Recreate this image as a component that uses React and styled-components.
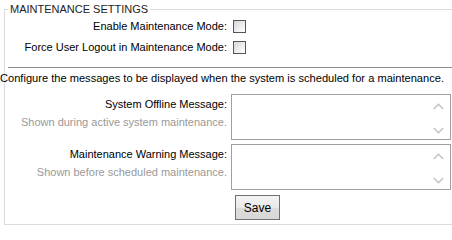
import React from "react";
import styled, { createGlobalStyle } from "styled-components";

const Global = createGlobalStyle`
  html, body { margin: 0; padding: 0; background: #fff; overflow: hidden; }
  body {
    font-family: "Liberation Sans", Arial, sans-serif;
    font-size: 11px;
    color: #000;
    width: 452px;
  }
`;

const Fieldset = styled.fieldset`
  box-sizing: border-box;
  width: 470px;
  margin: 3px 0 0 4px;
  padding: 0 0 4px 0;
  border: 1px solid #dcdcdc;
  min-width: 0;
`;

const Legend = styled.legend`
  padding: 0 2px;
  margin-left: 3px;
  font-size: 11px;
  line-height: 13px;
  color: #222;
  text-transform: uppercase;
`;

const CheckRow = styled.div`
  display: flex;
  align-items: center;
  height: 21px;
`;

const Label = styled.label`
  width: 222px;
  text-align: right;
  line-height: 13px;
  white-space: nowrap;
`;

const Checkbox = styled.input.attrs({ type: "checkbox" })`
  appearance: none;
  -webkit-appearance: none;
  box-sizing: border-box;
  width: 13px;
  height: 13px;
  margin: 0 0 0 6px;
  border: 1px solid #555;
  background: linear-gradient(135deg, #d6d6d6 0%, #f4f4f4 70%, #fff 100%);
`;

const Divider = styled.div`
  margin: 9px 0 0 3px;
  border-top: 1px solid #8c8c8c;
  height: 0;
`;

const Intro = styled.p`
  margin: 4px 0 0 -5px;
  font-size: 11.1px;
  line-height: 13px;
  white-space: nowrap;
`;

const MessageRow = styled.div`
  display: flex;
  margin-top: ${(p) => p.$gap}px;
`;

const LabelCol = styled.div`
  width: 222px;
  padding-top: 4px;
  text-align: right;
  white-space: nowrap;
  line-height: 13px;
`;

const Hint = styled.div`
  margin-top: 5px;
  color: #999;
`;

const AreaBox = styled.div`
  box-sizing: border-box;
  display: flex;
  width: 220px;
  height: 46px;
  margin-left: 4px;
  border: 1px solid #a0a0a0;
  background: #fff;
`;

const TextArea = styled.textarea`
  flex: 1;
  border: none;
  outline: none;
  resize: none;
  padding: 2px;
  font: inherit;
  overflow: hidden;
  background: transparent;
`;

const ScrollCol = styled.div`
  display: flex;
  flex-direction: column;
  align-items: flex-end;
  justify-content: space-between;
  width: 20px;
  padding: 8px 6px 5px 0;
  box-sizing: border-box;
`;

const ButtonRow = styled.div`
  display: flex;
  padding-left: 230px;
  margin-top: 5px;
`;

const Button = styled.button`
  box-sizing: border-box;
  width: 45px;
  height: 25px;
  border: 1px solid #707070;
  background: linear-gradient(#f4f4f4, #e8e8e8 50%, #dcdcdc 51%, #d8d8d8);
  font-family: "Liberation Sans", Arial, sans-serif;
  font-size: 12px;
  color: #000;
  padding: 0;
`;

const Chevron = ({ up }) => (
  <svg width="11" height="7" viewBox="0 0 11 7">
    <polyline
      points={up ? "0.8,6 5.5,1.3 10.2,6" : "0.8,1 5.5,5.7 10.2,1"}
      fill="none"
      stroke="#c4c4c4"
      strokeWidth="1.6"
    />
  </svg>
);

const MessageField = ({ label, hint, gap }) => (
  <MessageRow $gap={gap}>
    <LabelCol>
      <div>{label}</div>
      <Hint>{hint}</Hint>
    </LabelCol>
    <AreaBox>
      <TextArea />
      <ScrollCol>
        <Chevron up />
        <Chevron />
      </ScrollCol>
    </AreaBox>
  </MessageRow>
);

export default function App() {
  return (
    <>
      <Global />
      <Fieldset>
        <Legend>Maintenance Settings</Legend>
        <CheckRow>
          <Label>Enable Maintenance Mode:</Label>
          <Checkbox />
        </CheckRow>
        <CheckRow>
          <Label>Force User Logout in Maintenance Mode:</Label>
          <Checkbox />
        </CheckRow>
        <Divider />
        <Intro>
          Configure the messages to be displayed when the system is scheduled for a maintenance.
        </Intro>
        <MessageField
          gap={9}
          label="System Offline Message:"
          hint="Shown during active system maintenance."
        />
        <MessageField
          gap={4}
          label="Maintenance Warning Message:"
          hint="Shown before scheduled maintenance."
        />
        <ButtonRow>
          <Button>Save</Button>
        </ButtonRow>
      </Fieldset>
    </>
  );
}
